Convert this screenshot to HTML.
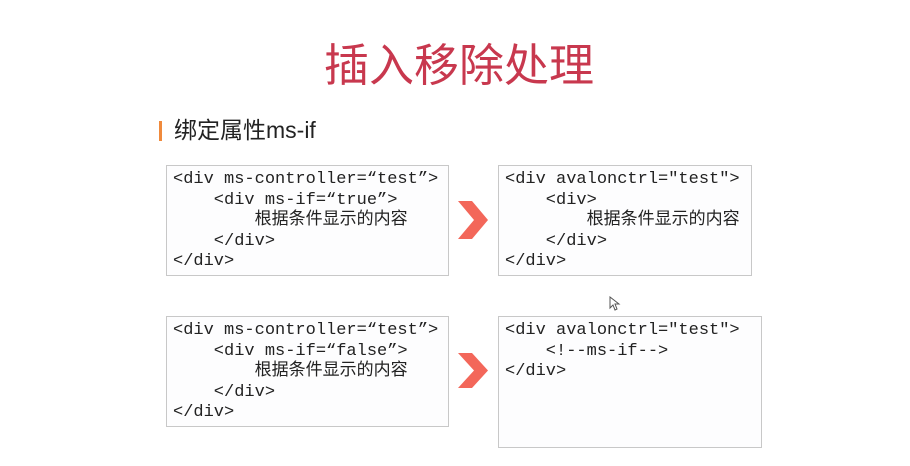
<!DOCTYPE html>
<html><head><meta charset="utf-8"><style>
body{margin:0;width:910px;height:466px;background:#fff;position:relative;overflow:hidden;font-family:"Liberation Sans","Noto Sans CJK SC",sans-serif}
.t{position:absolute;left:0;width:918px;text-align:center;top:36px;font-size:45px;color:#c8384e;line-height:60px}
.bar{position:absolute;left:159px;top:121px;width:3px;height:20px;background:#f08a3c}
.sub{position:absolute;left:174px;top:115px;font-size:23px;color:#222;line-height:30px}
.b{position:absolute;border:1px solid #c8c8c8;background:#fdfdfe;box-sizing:border-box;padding:4px 0 0 6px;font-family:"Liberation Mono","Noto Sans CJK SC",monospace;font-size:17px;line-height:20.5px;color:#222;white-space:pre}
.a{position:absolute;width:30px;height:38px}
</style></head><body>
<div class="t">插入移除处理</div>
<div class="bar"></div>
<div class="sub">绑定属性ms-if</div>
<div class="b" style="left:166px;top:165px;width:283px;height:111px">&lt;div ms-controller=“test”&gt;
    &lt;div ms-if=“true”&gt;
        根据条件显示的内容
    &lt;/div&gt;
&lt;/div&gt;</div>
<div class="b" style="left:498px;top:165px;width:254px;height:111px">&lt;div avalonctrl="test"&gt;
    &lt;div&gt;
        根据条件显示的内容
    &lt;/div&gt;
&lt;/div&gt;</div>
<div class="b" style="left:166px;top:316px;width:283px;height:111px">&lt;div ms-controller=“test”&gt;
    &lt;div ms-if=“false”&gt;
        根据条件显示的内容
    &lt;/div&gt;
&lt;/div&gt;</div>
<div class="b" style="left:498px;top:316px;width:264px;height:132px">&lt;div avalonctrl="test"&gt;
    &lt;!--ms-if--&gt;
&lt;/div&gt;</div>
<svg class="a" style="left:458px;top:201px" viewBox="0 0 30 38"><polygon points="0,0 14,0 30,19 14,38 0,38 16,19" fill="#f3675a"/></svg>
<svg class="a" style="left:458px;top:353px;height:35px" viewBox="0 0 30 38" preserveAspectRatio="none"><polygon points="0,0 14,0 30,19 14,38 0,38 16,19" fill="#f3675a"/></svg>
<svg style="position:absolute;left:609px;top:296px" width="12" height="16" viewBox="0 0 12 16"><path d="M1 1 L1 12 L4 9 L6 14 L8 13 L6 8 L10 8 Z" fill="#fff" stroke="#555" stroke-width="1"/></svg>
</body></html>
